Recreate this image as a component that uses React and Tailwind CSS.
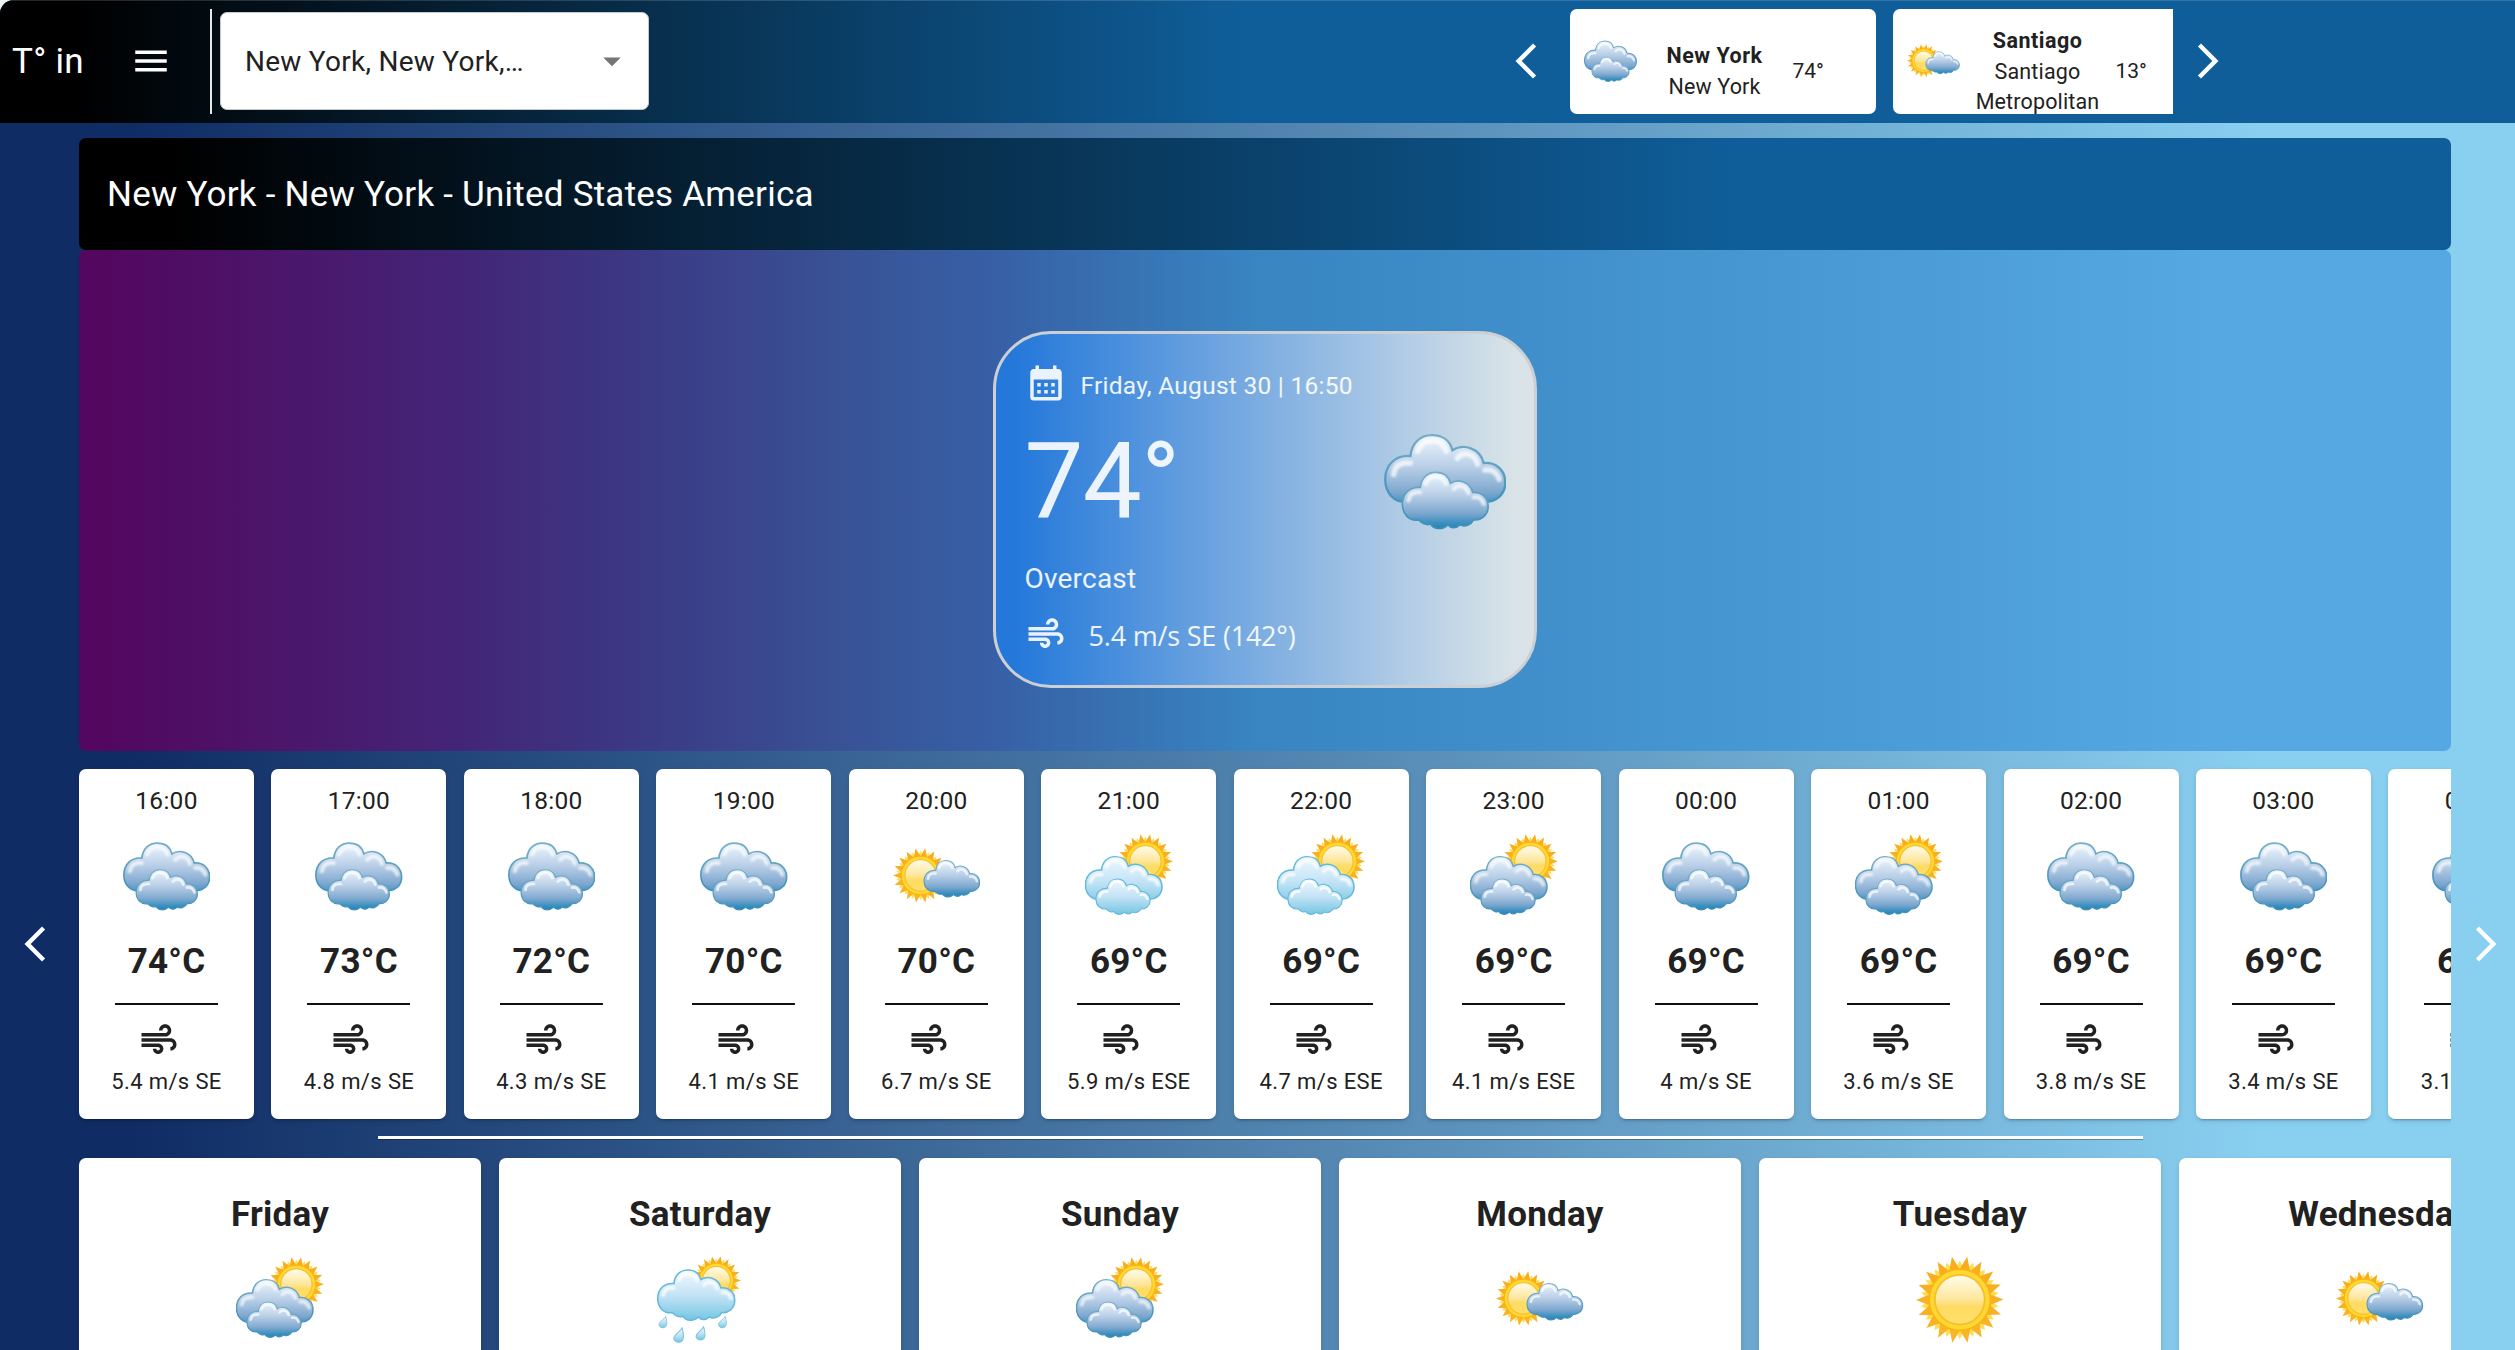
import React, { useId } from "react";
import {
  MdMenu,
  MdArrowDropDown,
  MdArrowBackIosNew,
  MdArrowForwardIos,
  MdCalendarMonth,
  MdAir,
} from "react-icons/md";

const CLOUD =
  "M19 57 C8 59 0 50 0 38 C0 26 8 17 21 18 C22 7 29 0 39 0 C48 0 54 5 56 13 C65 7 79 11 82 24 C92 23 100 30 100 41 C100 51 92 58 83 57 C80 63 73 66 67 63 C62 68 56 67 53 63 C47 69 37 69 33 62 C28 64 22 61 19 57Z";
const SHINE =
  "M7 34 C8 26 13 23 21 24 M27 14 C30 6 35 5 39 5 C45 5 49 8 51 14 M60 20 C65 14 74 15 77 25 M83 30 C89 29 93 32 95 38";

function rays(count, outer, inner, turn) {
  const pts = [];
  for (let i = 0; i < count * 2; i++) {
    const r = i % 2 ? inner : outer;
    const a = (Math.PI * i) / count + turn;
    pts.push(`${(r * Math.sin(a)).toFixed(2)},${(-r * Math.cos(a)).toFixed(2)}`);
  }
  return pts.join(" ");
}
const RAYS = rays(18, 50, 35, 0.17);
const RAYS_BACK = rays(18, 45, 34, 0);

function Sun({ id, x, y, r }) {
  return (
    <g transform={`translate(${x} ${y}) scale(${r / 50})`}>
      <polygon points={RAYS_BACK} fill="#ffdf52" />
      <polygon points={RAYS} fill={`url(#${id}ray)`} />
      <circle r="36" fill="#fbb418" />
      <circle r="34" fill="#ffd930" />
      <circle r="29.5" fill="#f6bd2c" />
      <circle r="27.5" fill={`url(#${id}disc)`} />
    </g>
  );
}

function Cloud({ id, x, y, w, light }) {
  return (
    <g transform={`translate(${x} ${y}) scale(${w / 100} ${(w / 100) * 0.97})`}>
      <path
        d={CLOUD}
        fill={light ? `url(#${id}light)` : `url(#${id}dark)`}
        stroke={light ? "#62b9dd" : `url(#${id}edge)`}
        strokeWidth="2"
      />
      <path
        d={SHINE}
        fill="none"
        stroke="#fff"
        strokeOpacity={light ? 0.85 : 0.7}
        strokeWidth="4.5"
        strokeLinecap="round"
        filter={`url(#${id}soft)`}
      />
    </g>
  );
}

function Drop({ id, x, y, s = 1 }) {
  return (
    <path
      transform={`translate(${x} ${y}) scale(${s})`}
      d="M3 -7 C4 -3 5 0 4 3 C3 7 -3 7 -4.500 3 C-5 -1 1 -3 3 -7Z"
      fill={`url(#${id}light)`}
      stroke="#7cc3de"
      strokeWidth="1"
    />
  );
}

function WeatherIcon({ kind, className }) {
  const id = useId().replace(/[^a-zA-Z0-9]/g, "");
  return (
    <svg viewBox="0 0 100 100" className={`shrink-0 ${className}`}>
      <defs>
        <linearGradient id={`${id}dark`} x1="0" y1="0" x2="0" y2="1">
          <stop offset="0" stopColor="#eef6fe" />
          <stop offset="0.4" stopColor="#b9cfe7" />
          <stop offset="0.72" stopColor="#7fa8cf" />
          <stop offset="0.9" stopColor="#3b8fc0" />
          <stop offset="1" stopColor="#2483b3" />
        </linearGradient>
        <linearGradient id={`${id}edge`} x1="0" y1="0" x2="0" y2="1">
          <stop offset="0" stopColor="#77adc8" />
          <stop offset="1" stopColor="#3a8fb9" />
        </linearGradient>
        <linearGradient id={`${id}light`} x1="0" y1="0" x2="0" y2="1">
          <stop offset="0" stopColor="#f0f8ff" />
          <stop offset="0.5" stopColor="#c3e3f5" />
          <stop offset="1" stopColor="#74c6e2" />
        </linearGradient>
        <linearGradient id={`${id}disc`} x1="0" y1="0" x2="0" y2="1">
          <stop offset="0" stopColor="#fffbea" />
          <stop offset="0.5" stopColor="#fde69a" />
          <stop offset="0.65" stopColor="#ffdb62" />
          <stop offset="1" stopColor="#ffdf6b" />
        </linearGradient>
        <linearGradient id={`${id}ray`} x1="0" y1="0" x2="0" y2="1">
          <stop offset="0" stopColor="#f9ab1c" />
          <stop offset="1" stopColor="#f9b529" />
        </linearGradient>
        <filter id={`${id}soft`} x="-10%" y="-10%" width="120%" height="120%">
          <feGaussianBlur stdDeviation="1.1" />
        </filter>
      </defs>
      {kind === "overcast" && (
        <>
          <Cloud id={id} x={1} y={11.5} w={98} />
          <Cloud id={id} x={15} y={42} w={70} />
        </>
      )}
      {kind === "fair" && (
        <>
          <Sun id={id} x={31.5} y={48.5} r={31.5} />
          <Cloud id={id} x={35.500} y={31.500} w={63.5} />
        </>
      )}
      {(kind === "partlyLight" || kind === "partly") && (
        <>
          <Sun id={id} x={69} y={32.5} r={31.5} />
          <Cloud id={id} x={0.5} y={27} w={87.5} light={kind === "partlyLight"} />
          <Cloud id={id} x={12.5} y={52.5} w={62} light={kind === "partlyLight"} />
        </>
      )}
      {kind === "rain" && (
        <>
          <Sun id={id} x={69} y={28} r={28} />
          <Cloud id={id} x={2} y={16} w={88} light />
          <Drop id={id} x={8} y={76} />
          <Drop id={id} x={26} y={91} s={1.25} />
          <Drop id={id} x={51} y={89} s={1.15} />
          <Drop id={id} x={76} y={76} />
        </>
      )}
      {kind === "sun" && <Sun id={id} x={50} y={50} r={50} />}
    </svg>
  );
}

const HOURS = [
  ["16:00", "overcast", 74, "5.4 m/s SE"],
  ["17:00", "overcast", 73, "4.8 m/s SE"],
  ["18:00", "overcast", 72, "4.3 m/s SE"],
  ["19:00", "overcast", 70, "4.1 m/s SE"],
  ["20:00", "fair", 70, "6.7 m/s SE"],
  ["21:00", "partlyLight", 69, "5.9 m/s ESE"],
  ["22:00", "partlyLight", 69, "4.7 m/s ESE"],
  ["23:00", "partly", 69, "4.1 m/s ESE"],
  ["00:00", "overcast", 69, "4 m/s SE"],
  ["01:00", "partly", 69, "3.6 m/s SE"],
  ["02:00", "overcast", 69, "3.8 m/s SE"],
  ["03:00", "overcast", 69, "3.4 m/s SE"],
  ["04:00", "overcast", 69, "3.1 m/s SE"],
];

const DAYS = [
  ["Friday", "partly"],
  ["Saturday", "rain"],
  ["Sunday", "partly"],
  ["Monday", "fair"],
  ["Tuesday", "sun"],
  ["Wednesday", "fair"],
];

const CARD_SHADOW =
  "shadow-[0_3px_2px_-2px_rgba(0,0,0,0.25),0_2px_5px_0_rgba(0,0,0,0.12)]";

function HourCard({ time, kind, temp, wind }) {
  return (
    <article
      className={`flex h-[350px] w-[175px] shrink-0 flex-col items-center rounded-[7px] bg-white pt-[11.500px] text-[#212121] ${CARD_SHADOW}`}
    >
      <p className="text-[24.500px] leading-[40px] tracking-[0.26px]">{time}</p>
      <WeatherIcon kind={kind} className="mt-[12px] size-[87.500px]" />
      <p className="mt-[14px] text-[35px] leading-[56px] font-bold tracking-[0.26px]">{temp}°C</p>
      <hr className="mt-[12.500px] w-[103px] border-t-2 border-[#111]" />
      <MdAir className="mt-[14px] mr-[15px] size-[42px]" />
      <p className="mt-[2.500px] text-[22px] leading-[38px] tracking-[0.38px] whitespace-nowrap">{wind}</p>
    </article>
  );
}

function DayCard({ name, kind }) {
  return (
    <article
      className={`flex h-[420px] w-[402px] shrink-0 flex-col items-center rounded-[7px] bg-white pt-[29px] text-[#212121] ${CARD_SHADOW}`}
    >
      <h2 className="text-[35px] leading-[56px] font-bold tracking-[0.26px]">{name}</h2>
      <WeatherIcon kind={kind} className="mt-[12.500px] size-[87.500px]" />
    </article>
  );
}

function CityCard({ kind, city, region, temp }) {
  return (
    <article className="flex h-[105px] w-[306px] shrink-0 items-center overflow-hidden rounded-[7px] bg-white pl-[13.500px] text-[#212121]">
      <WeatherIcon kind={kind} className="size-[53px]" />
      <div className="ml-[9px] flex w-[138px] translate-y-[5px] flex-col items-center pt-[9px] text-center text-[21.500px] leading-[30px]">
        <p className="font-bold tracking-[0.5px]">{city}</p>
        <p className="pt-px tracking-[0.15px]">{region}</p>
      </div>
      <p className="ml-[9px] pt-[18px] text-[21px] leading-[30px]">{temp}°</p>
    </article>
  );
}

export default function App() {
  return (
    <div className="h-[1350px] w-[2515px] overflow-hidden bg-[#eef4f4] font-[Roboto,sans-serif]">
      <div className="flex h-full flex-col overflow-hidden rounded-tl-[14px] bg-[linear-gradient(90deg,#0f2c64_5%,#89cff0_90%)]">
        <header className="flex h-[123px] shrink-0 items-start border-t border-white/15 bg-[linear-gradient(90deg,#000_3%,#0f5e9a_49.500%)] pt-[8px] pl-[12px]">
          <span className="w-[118px] text-[35px] leading-[105px] tracking-[0.26px] text-white">T° in</span>
          <MdMenu className="mt-[31px] size-[42px] text-white" />
          <div className="ml-[38px] h-[105px] w-[1.500px] bg-white/90" />
          <div className="mt-[3px] ml-[8.500px] flex h-[98px] w-[429px] items-center justify-between rounded-[7px] border border-[#c4c8cc] bg-white pr-[15px] pl-[24px]">
            <span className="pt-px text-[28px] leading-[40px] tracking-[0.26px] text-[#212121]">New York, New York,…</span>
            <MdArrowDropDown className="size-[42px] text-[#757575]" />
          </div>
          <MdArrowBackIosNew className="mt-[31px] ml-[856px] size-[42px] text-white" />
          <div className="ml-[23px] flex w-[603px] gap-[17px] overflow-hidden">
            <CityCard kind="overcast" city="New York" region="New York" temp={74} />
            <CityCard kind="fair" city="Santiago" region="Santiago Metropolitan" temp={13} />
          </div>
          <MdArrowForwardIos className="mt-[31px] ml-[14px] size-[42px] text-white" />
        </header>

        <main className="flex flex-col pt-[15px] pr-[64px] pl-[79px]">
          <h1 className="h-[112px] rounded-[7px] bg-[linear-gradient(90deg,#000_4%,#0f5e9a_70%)] pt-px pl-[28px] text-[35px] leading-[111px] tracking-[0.23px] text-white">
            New York - New York - United States America
          </h1>

          <section className="flex h-[501px] items-center justify-center rounded-[7px] bg-[linear-gradient(90deg,#53075f_1%,#432577_16%,#3b3b85_24.200%,#395296_32.200%,#3760a6_38.700%,#3885c1_49.500%,#55a8e1_90%)] pt-[17px]">
            <div className="flex h-[357px] w-[544px] justify-between rounded-[58px] border-[3px] border-[#cccfd4] bg-[linear-gradient(90deg,#2378da_3%,#dae4e8_97%)] pr-[28px] pl-[28.500px] text-white/90">
              <div className="flex flex-col pt-[28px]">
                <div className="flex items-center">
                  <MdCalendarMonth className="size-[42px]" />
                  <span className="ml-[14px] pt-[6px] text-[24.500px] leading-[36px] tracking-[0.26px]">
                    Friday, August 30 | 16:50
                  </span>
                </div>
                <p className="mt-[17px] text-[105px] leading-[122px] tracking-[-0.7px]">74°</p>
                <p className="mt-[15px] text-[28px] leading-[42px] tracking-[0.2px]">Overcast</p>
                <div className="mt-[12px] flex items-center">
                  <MdAir className="size-[42px]" />
                  <span className="ml-[22px] pt-[4px] font-['Open_Sans'] text-[27px] leading-[40px] tracking-[-0.2px]">
                    5.4 m/s SE (142°)
                  </span>
                </div>
              </div>
              <WeatherIcon kind="overcast" className="mt-[87px] size-[122.500px]" />
            </div>
          </section>

          <section className="mt-[18px] -mr-[64px] -ml-[79px] flex items-center">
            <MdArrowBackIosNew className="mr-[15px] ml-[14px] size-[42px] shrink-0 text-white" />
            <div className="-mt-[10px] -mb-[10px] ml-[-2px] flex w-[2382px] shrink-0 gap-[17.460px] overflow-hidden py-[10px] pl-[10px]">
              {HOURS.map(([time, kind, temp, wind]) => (
                <HourCard key={time} time={time} kind={kind} temp={temp} wind={wind} />
              ))}
            </div>
            <MdArrowForwardIos className="ml-[14px] size-[42px] shrink-0 text-white" />
          </section>

          <hr className="mt-[17px] ml-[299px] w-[1765px] border-t-[3px] border-white shadow-[0_1px_0_rgba(0,0,0,0.3)]" />

          <section className="mt-[19px] flex gap-[18px] overflow-x-clip">
            {DAYS.map(([name, kind]) => (
              <DayCard key={name} name={name} kind={kind} />
            ))}
          </section>
        </main>
      </div>
    </div>
  );
}
